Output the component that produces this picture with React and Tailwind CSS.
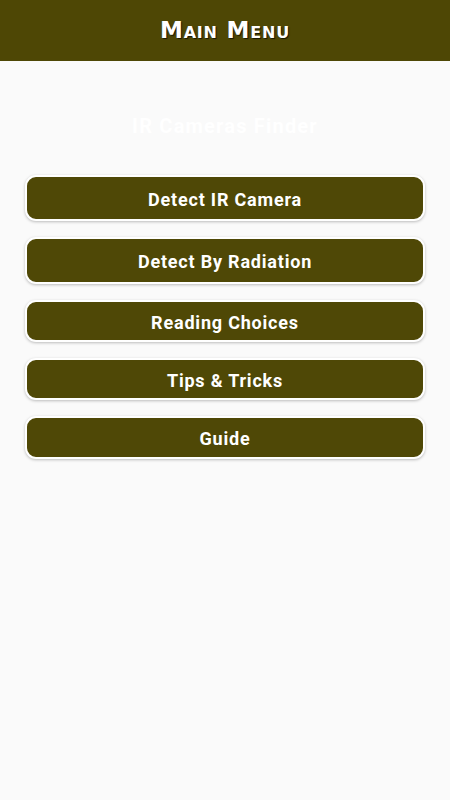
import React from "react";

const buttons = [
  { label: "Detect IR Camera", h: "h-[46px]" },
  { label: "Detect By Radiation", h: "h-[47px]" },
  { label: "Reading Choices", h: "h-[42px]" },
  { label: "Tips & Tricks", h: "h-[42px]" },
  { label: "Guide", h: "h-[43px]" },
];

export default function App() {
  return (
    <div className="w-[450px] h-[800px] bg-[#fafafa] flex flex-col" style={{ fontFamily: "Roboto, 'Liberation Sans', sans-serif" }}>
      <header className="h-[61px] bg-[#4e4705] flex items-center justify-center shrink-0">
        <h1
          className="text-white text-[23px] font-bold tracking-[0.8px] leading-none [font-variant:small-caps] [text-shadow:1px_1px_1px_rgba(0,0,0,0.7)]"
          style={{ fontFamily: "'DejaVu Sans', sans-serif" }}
        >
          Main Menu
        </h1>
      </header>
      <div className="mt-[51px] text-center text-white text-[20px] font-bold leading-[28px] tracking-[1.2px]">
        IR Cameras Finder
      </div>
      <div className="mt-[35px] px-[25px] flex flex-col gap-4">
        {buttons.map((b) => (
          <button
            key={b.label}
            className={`${b.h} w-full rounded-[11px] border-2 border-white bg-[#4f4806] shadow-[0_1px_3px_rgba(0,0,0,0.25)] text-white text-[18px] font-bold tracking-[0.8px] flex items-center justify-center pt-[3px]`}
          >
            <span className="leading-none">{b.label}</span>
          </button>
        ))}
      </div>
    </div>
  );
}
